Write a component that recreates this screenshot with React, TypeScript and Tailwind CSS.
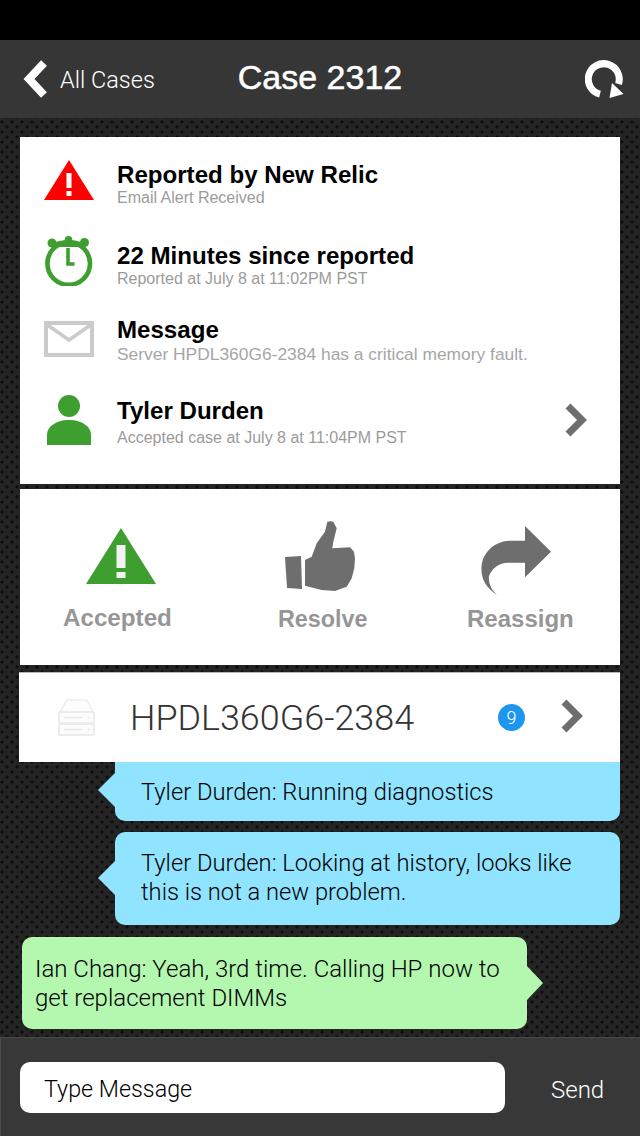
const sans = "font-['Liberation_Sans',Arial,sans-serif]";

function Chevron({ className }: { className: string }) {
  return (
    <svg viewBox="0 0 23 34" className={className}>
      <path d="M4 3 L18 17 L4 31" fill="none" stroke="#6e6e6e" strokeWidth="7" />
    </svg>
  );
}

function InfoRow({ icon, title, sub, rowClass, subClass, iconBox, chevron }: { icon: React.ReactNode; title: string; sub: string; rowClass: string; subClass: string; iconBox: string; chevron?: boolean }) {
  return (
    <div className={`flex items-start ${rowClass}`}>
      <div className={`w-[97px] shrink-0 flex justify-center ${iconBox}`}>{icon}</div>
      <div className="flex-1">
        <div className="text-[24.1px] leading-[30px] font-bold text-black">{title}</div>
        <div className={`leading-[20px] ${subClass}`}>{sub}</div>
      </div>
      {chevron && <Chevron className="w-[23px] h-[34px] mr-[33px] mt-[7px]" />}
    </div>
  );
}

function Action({ icon, label, cls, labelClass }: { icon: React.ReactNode; label: string; cls: string; labelClass: string }) {
  return (
    <div className={`absolute flex flex-col items-center ${cls}`}>
      {icon}
      <div className={`leading-[30px] font-bold text-[#969696] ${labelClass}`}>{label}</div>
    </div>
  );
}

export default function App() {
  return (
    <div className={`w-[640px] h-[1136px] overflow-hidden flex flex-col bg-[#222222] ${sans}`}>
      <div className="h-[40px] bg-black shrink-0" />
      <header className="h-[78px] shrink-0 bg-[#363636] grid grid-cols-[1fr_auto_1fr] items-center text-white">
        <div className="flex items-center pl-[23px]">
          <svg viewBox="0 0 26 38" className="w-[26px] h-[38px]">
            <path d="M21 3 L6 19 L21 35" fill="none" stroke="#fff" strokeWidth="8" />
          </svg>
          <span className="ml-[11px] pt-[3px] text-[23.5px] font-['Roboto'] font-light">All Cases</span>
        </div>
        <div className="pb-[4px] text-[34px] [-webkit-text-stroke:0.5px_#fff]">Case 2312</div>
        <div className="flex justify-end pr-[16px]">
          <svg viewBox="0 0 39 38" className="w-[39px] h-[38px]">
            <path d="M15 34.2 A15.5 15.5 0 1 1 33.5 24" fill="none" stroke="#fff" strokeWidth="7" />
            <path d="M27 23 L38.5 34 L24.5 38 Z" fill="#fff" />
          </svg>
        </div>
      </header>
      <main className="flex-1 relative bg-[#242424] bg-[radial-gradient(circle,#0c0c0c_1.2px,transparent_1.9px),radial-gradient(circle,#0c0c0c_1.2px,transparent_1.9px)] bg-[length:10px_10px] bg-[position:2px_4px,7px_9px] pt-[19px]">
        <section className="mx-[20px] h-[347px] bg-white pt-[23px]">
          <InfoRow
            rowClass=""
            subClass="text-[16px] text-[#9b9b9b] -mt-[2px]"
            iconBox="pt-0"
            title="Reported by New Relic"
            sub="Email Alert Received"
            icon={
              <svg viewBox="0 0 50 40" className="w-[50px] h-[40px]">
                <path d="M25 0 L50 40 L0 40 Z" fill="#ff0000" />
                <rect x="22.5" y="13" width="5" height="15" fill="#fff" />
                <rect x="22.5" y="31" width="5" height="5" fill="#fff" />
              </svg>
            }
          />
          <InfoRow
            rowClass="mt-[33px]"
            subClass="text-[16px] text-[#9b9b9b] -mt-[2px]"
            iconBox="-mt-[5px]"
            title="22 Minutes since reported"
            sub="Reported at July 8 at 11:02PM PST"
            icon={
              <svg viewBox="0 0 50 50" className="w-[50px] h-[50px]">
                <circle cx="24.7" cy="27.5" r="21.3" fill="none" stroke="#3f9e30" strokeWidth="4.6" />
                <circle cx="8" cy="7" r="4.5" fill="#3f9e30" />
                <circle cx="24.5" cy="3.8" r="3.8" fill="#3f9e30" />
                <circle cx="40.5" cy="6.5" r="4.5" fill="#3f9e30" />
                <path d="M8 7 Q24.5 1 40.5 7 L36 11 H13 Z" fill="#3f9e30" />
                <path d="M24 12 V28 H30.5" fill="none" stroke="#3f9e30" strokeWidth="3.6" />
              </svg>
            }
          />
          <InfoRow
            rowClass="mt-[26px]"
            subClass="text-[17.4px] text-[#a6a6a6] -mt-[1px]"
            iconBox="mt-[6px]"
            title="Message"
            sub="Server HPDL360G6-2384 has a critical memory fault."
            icon={
              <svg viewBox="0 0 50 36" className="w-[50px] h-[36px]">
                <rect x="2" y="2" width="46" height="32" fill="#fff" stroke="#cbcbcb" strokeWidth="4" />
                <path d="M2 3 L25 19 L48 3" fill="none" stroke="#cbcbcb" strokeWidth="3.5" />
              </svg>
            }
          />
          <InfoRow
            rowClass="mt-[32px]"
            subClass="text-[16px] text-[#9b9b9b] mt-[2px]"
            iconBox="-mt-[1px]"
            chevron
            title="Tyler Durden"
            sub="Accepted case at July 8 at 11:04PM PST"
            icon={
              <svg viewBox="0 0 44 50" className="w-[44px] h-[50px]">
                <circle cx="22" cy="11" r="11" fill="#3f9e30" />
                <path d="M0 50 V40 C0 31 10 25 22 25 C34 25 44 31 44 40 V50 Z" fill="#3f9e30" />
              </svg>
            }
          />
        </section>
        <section className="relative mx-[20px] mt-[5px] h-[176px] bg-white">
          <Action
            cls="left-[43px] top-[39px]"
            label="Accepted"
            labelClass="text-[24.2px]"
            icon={
              <svg viewBox="0 0 70 56" className="w-[70px] h-[56px] mb-[19px] ml-[8px]">
                <path d="M35 0 L70 56 L0 56 Z" fill="#3f9e30" />
                <rect x="30.5" y="17" width="9" height="23" fill="#f2f2f2" />
                <rect x="30.5" y="44" width="9" height="6" fill="#f2f2f2" />
              </svg>
            }
          />
          <Action
            cls="left-[258px] top-[32px]"
            label="Resolve"
            labelClass="text-[23.3px]"
            icon={
              <svg viewBox="0 0 70 70" className="w-[70px] h-[70px] mb-[13px] mr-[6px]">
                <path d="M0 36 L16 35 L17 68 L2 67 Z" fill="#6e6e6e" />
                <path d="M20 39 L26.7 35.7 L31.7 22.3 L40 10.7 L42.3 0.7 C45 0 47 0 48.3 0.7 L51.7 7.3 L48.3 20.7 L47.3 27.3 L65 26.3 L69 30.7 L70 37.3 L69.3 47.3 L66.7 57.3 L61.7 65.7 L50 70 L36.7 69 L20 64.7 Z" fill="#6e6e6e" />
              </svg>
            }
          />
          <Action
            cls="left-[447px] top-[37px]"
            label="Reassign"
            labelClass="text-[24px]"
            icon={
              <svg viewBox="0 0 70 70" className="w-[70px] h-[70px] mb-[8px] mr-[8px]">
                <path d="M44 0 L70 25.7 L44 51.3 V36.7 H27 C18 37 11 42 8 50 C7 58 11 64 16 69 C6 62 0 54 0.5 42 C1 26 14 15 29 14.7 H44 Z" fill="#6e6e6e" />
              </svg>
            }
          />
        </section>
        <section className="ml-[19px] mr-[20px] mt-[7px] h-[90px] bg-white border-t border-[#b8b8b8] flex items-center">
          <svg viewBox="0 0 37 37" className="w-[37px] h-[37px] ml-[39px]">
            <path d="M2 13 L9 1 H29 L35 13" fill="#fcfcfc" stroke="#eeeeee" strokeWidth="1.5" />
            <rect x="1" y="13" width="35" height="11" rx="1.5" fill="#fcfcfc" stroke="#ececec" strokeWidth="2" />
            <rect x="1" y="25" width="35" height="11" rx="1.5" fill="#fcfcfc" stroke="#ececec" strokeWidth="2" />
            <path d="M6 18.5 H24 M6 30.5 H24 M30 18.5 H32 M30 30.5 H32" stroke="#e8e8e8" strokeWidth="1.5" />
          </svg>
          <span className="ml-[35px] pt-[2px] text-[35.9px] font-['Roboto'] font-light text-[#333] flex-1">HPDL360G6-2384</span>
          <span className="w-[27px] h-[27px] rounded-full bg-[#1e96f0] text-white text-[18px] font-['Roboto'] font-light flex items-center justify-center">9</span>
          <Chevron className="w-[23px] h-[34px] ml-[35px] mr-[37px] mb-[3px]" />
        </section>
        <section className="flex flex-col items-start leading-[29px] font-['Roboto'] font-light text-black">
          <div className="relative ml-[115px] w-[505px] h-[59px] bg-[#91e4ff] rounded-b-[10px] pl-[26px] pt-[16px] text-[23.7px]">
            <span className="absolute left-[-17px] top-[11px] w-0 h-0 border-y-[17px] border-y-transparent border-r-[17px] border-r-[#91e4ff]" />
            Tyler Durden: Running diagnostics
          </div>
          <div className="relative ml-[115px] mt-[11px] w-[505px] h-[93px] bg-[#91e4ff] rounded-[10px] pl-[26px] pt-[17px] text-[23.7px]">
            <span className="absolute left-[-17px] top-[29px] w-0 h-0 border-y-[17px] border-y-transparent border-r-[17px] border-r-[#91e4ff]" />
            Tyler Durden: Looking at history, looks like
            <br />
            this is not a new problem.
          </div>
          <div className="relative ml-[22px] mt-[12px] w-[505px] h-[92px] bg-[#b4f8b0] rounded-[10px] pl-[13px] pt-[18px] text-[24px]">
            <span className="absolute right-[-16px] top-[29px] w-0 h-0 border-y-[17px] border-y-transparent border-l-[16px] border-l-[#b4f8b0]" />
            Ian Chang: Yeah, 3rd time. Calling HP now to
            <br />
            get replacement DIMMs
          </div>
        </section>
      </main>
      <footer className="h-[99px] shrink-0 bg-[#383838] border-t border-l border-[#4a4a4a] flex items-center pl-[19px] pt-[1px]">
        <div className="w-[485px] h-[51px] bg-white rounded-[10px] pl-[24px] pt-[4px] flex items-center text-[23.3px] font-['Roboto'] font-light text-black">Type Message</div>
        <span className="ml-[46px] pt-[4px] text-[24px] font-['Roboto'] font-light text-white">Send</span>
      </footer>
    </div>
  );
}
